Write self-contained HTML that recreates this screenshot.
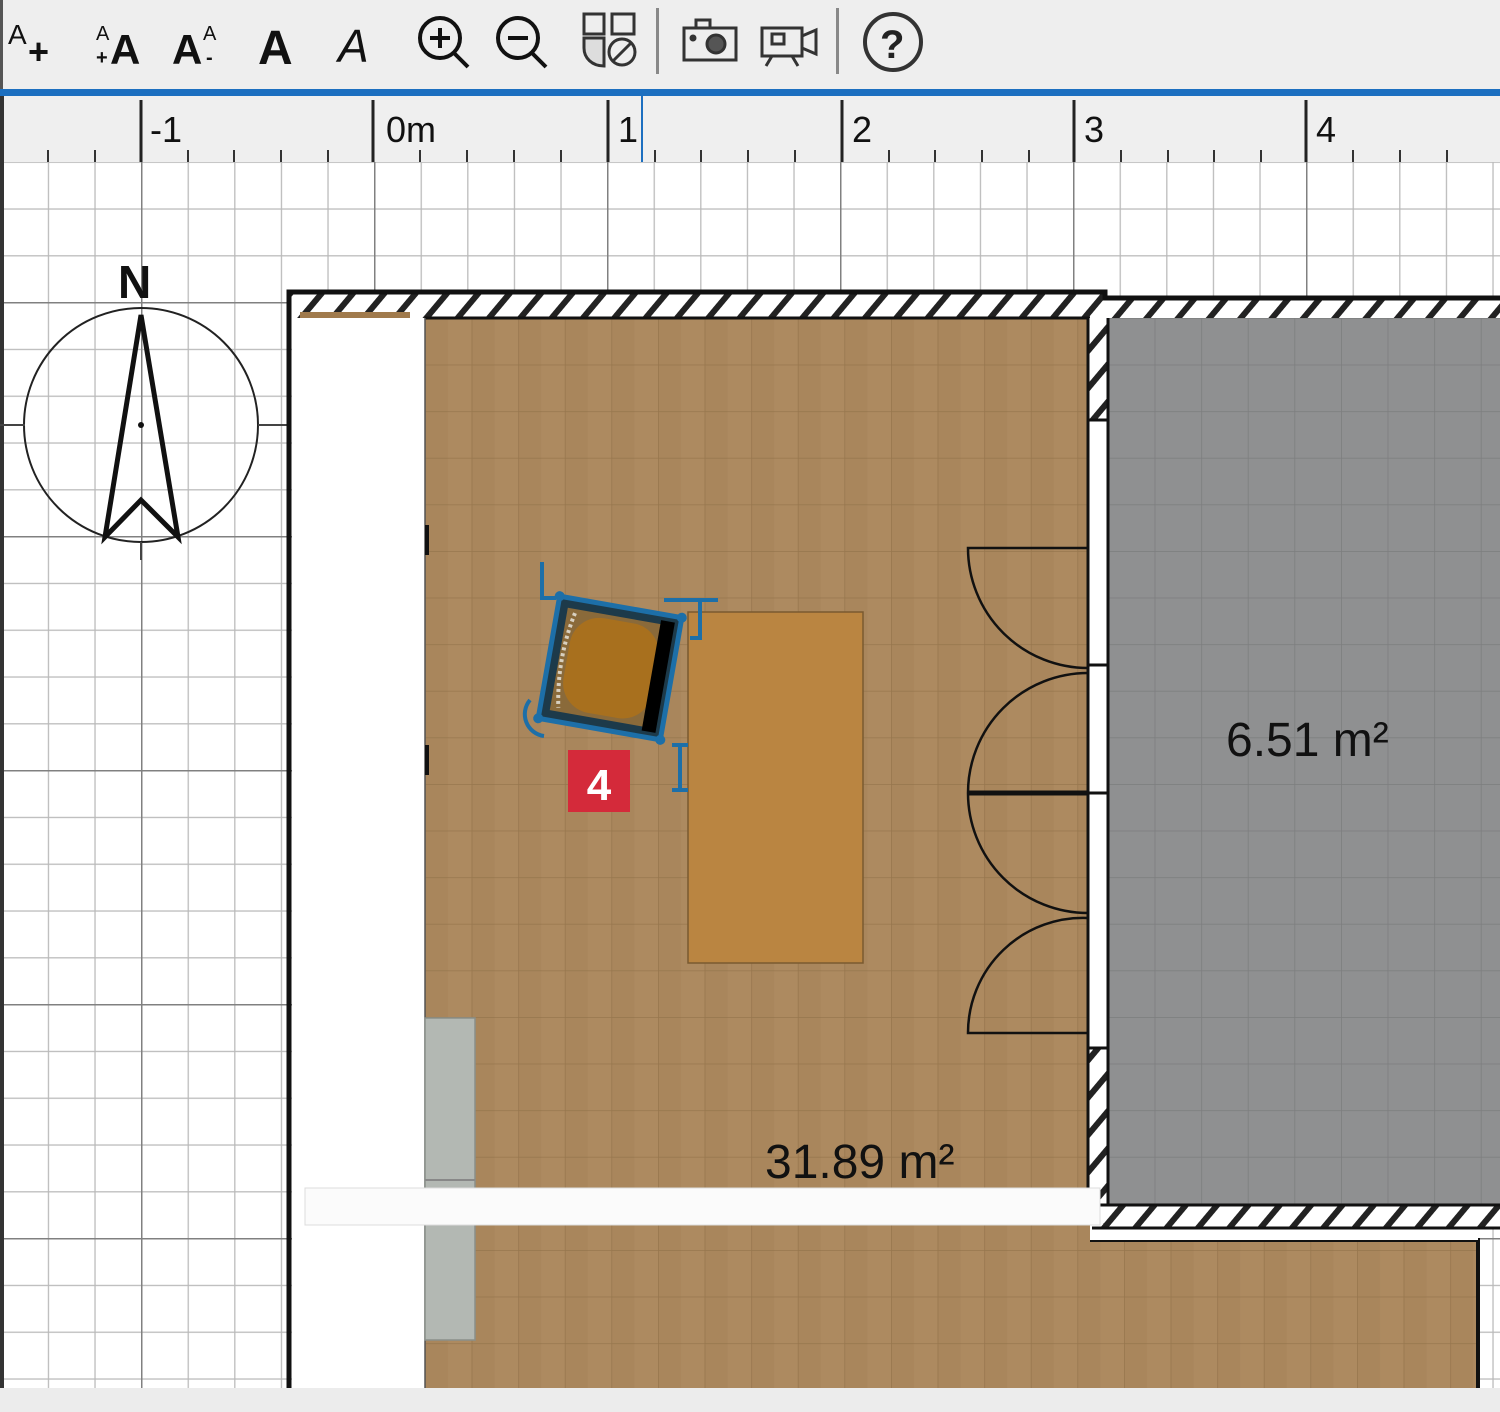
<!DOCTYPE html>
<html><head><meta charset="utf-8"><style>
html,body{margin:0;padding:0;background:#fff}
svg{display:block}
text{font-family:"Liberation Sans","DejaVu Sans",sans-serif}
</style></head><body>
<svg width="1500" height="1412" viewBox="0 0 1500 1412" xmlns="http://www.w3.org/2000/svg">
<defs>
<pattern id="minor" x="141" y="302" width="46.6" height="46.8" patternUnits="userSpaceOnUse">
<path d="M0 0V46.8M0 0H46.6" stroke="#b9b9b9" stroke-width="2.5" fill="none"/>
</pattern>
<pattern id="major" x="141" y="302" width="233" height="234" patternUnits="userSpaceOnUse">
<path d="M0 0V234M0 0H233" stroke="#808080" stroke-width="3" fill="none"/>
</pattern>
<pattern id="wood" x="425" y="318" width="46.6" height="46.6" patternUnits="userSpaceOnUse">
<rect width="46.6" height="46.6" fill="#a9865c"/>
<rect x="23" width="23.6" height="46.6" fill="#ad8a60"/>
<path d="M0 0V46.6M0 0H46.6" stroke="#8f6f48" stroke-width="1.5" fill="none" opacity=".7"/>
</pattern>
<pattern id="grey" x="1108" y="318" width="46.6" height="46.6" patternUnits="userSpaceOnUse">
<rect width="46.6" height="46.6" fill="#8f9091"/>
<path d="M0 0V46.6M0 0H46.6" stroke="#7c7d7e" stroke-width="1.5" fill="none"/>
</pattern>
<pattern id="hatch" width="24" height="24" patternUnits="userSpaceOnUse" patternTransform="rotate(40)">
<rect width="24" height="24" fill="#fff"/>
<rect width="6" height="24" fill="#222"/>
</pattern>
</defs>

<!-- toolbar -->
<rect x="0" y="0" width="1500" height="90" fill="#eeeeee"/>
<rect x="0" y="0" width="3" height="90" fill="#555"/>
<rect x="0" y="89" width="1500" height="7" fill="#1c6fc0"/>
<g fill="#111" font-weight="bold">
<text x="8" y="44" font-size="28" font-weight="normal">A</text>
<text x="28" y="64" font-size="36">+</text>
<text x="96" y="40" font-size="20" font-weight="normal">A</text>
<text x="96" y="64" font-size="20">+</text>
<text x="110" y="64" font-size="42">A</text>
<text x="172" y="64" font-size="42">A</text>
<text x="203" y="40" font-size="20" font-weight="normal">A</text>
<text x="206" y="64" font-size="20">-</text>
<text x="258" y="64" font-size="48">A</text>
<text x="338" y="62" font-size="46" font-weight="normal" font-style="italic">A</text>
</g>
<g stroke="#111" fill="none" stroke-width="4">
<circle cx="440" cy="38" r="20"/><path d="M454 53l14 14M430 38h20M440 28v20"/>
<circle cx="518" cy="38" r="20"/><path d="M532 53l14 14M508 38h20"/>
</g>
<g stroke="#333" fill="none" stroke-width="3">
<rect x="584" y="14" width="20" height="20"/><rect x="612" y="14" width="22" height="20"/>
<path d="M584 38h20v28c-12 0-20-8-20-18z" fill="#ddd"/>
<circle cx="622" cy="52" r="13"/><path d="M613 61l18-18"/>
</g>
<rect x="656" y="8" width="3" height="66" fill="#888"/>
<g stroke="#333" fill="none" stroke-width="3">
<rect x="684" y="28" width="52" height="32"/><rect x="696" y="20" width="14" height="8"/>
<circle cx="716" cy="44" r="9" fill="#555"/><circle cx="693" cy="38" r="2" fill="#333"/>
<rect x="762" y="28" width="40" height="28"/><path d="M802 36l14-6v24l-14-6"/>
<rect x="772" y="34" width="12" height="10"/><path d="M772 56l-6 10M792 56l6 10"/>
</g>
<rect x="836" y="8" width="3" height="66" fill="#888"/>
<circle cx="893" cy="42" r="28" fill="none" stroke="#333" stroke-width="4"/>
<text x="880" y="58" font-size="40" font-weight="bold" fill="#222">?</text>

<!-- ruler -->
<rect x="0" y="96" width="1500" height="66" fill="#efefef"/>
<g stroke="#222" stroke-width="3">
<path d="M141 100V162M373 100V162M608 100V162M842 100V162M1074 100V162M1306 100V162"/>
</g>
<g stroke="#333" stroke-width="2">
<path d="M48 150V162M95 150V162M188 150V162M234 150V162M281 150V162M328 150V162M420 150V162M467 150V162M514 150V162M561 150V162M655 150V162M701 150V162M748 150V162M795 150V162M889 150V162M935 150V162M982 150V162M1029 150V162M1121 150V162M1168 150V162M1214 150V162M1261 150V162M1353 150V162M1400 150V162M1447 150V162"/>
</g>
<path d="M642 96V166" stroke="#1c6fc0" stroke-width="2"/>
<g font-size="36" fill="#111">
<text x="150" y="142">-1</text><text x="386" y="142">0m</text><text x="618" y="142">1</text>
<text x="852" y="142">2</text><text x="1084" y="142">3</text><text x="1316" y="142">4</text>
</g>

<!-- grid -->
<rect x="0" y="162" width="1500" height="1226" fill="#fff"/>
<rect x="0" y="162" width="1500" height="1226" fill="url(#minor)"/>
<rect x="0" y="162" width="1500" height="1226" fill="url(#major)"/>
<rect x="0" y="96" width="4" height="1292" fill="#333"/>

<!-- compass -->
<circle cx="141" cy="425" r="117" fill="#fff" fill-opacity="0" stroke="#222" stroke-width="2"/>
<path d="M0 425H25M258 425H290M141 542V560" stroke="#444" stroke-width="2"/>
<path d="M141 315L105 537L141 500L178 537Z" fill="none" stroke="#111" stroke-width="5" stroke-linejoin="miter"/>
<circle cx="141" cy="425" r="3" fill="#111"/>
<text x="118" y="298" font-size="46" font-weight="bold" fill="#111">N</text>

<!-- floor -->
<rect x="425" y="318" width="665" height="1070" fill="url(#wood)"/>
<rect x="1090" y="1240" width="388" height="148" fill="url(#wood)"/>
<path d="M1090 1240H1478V1388" fill="none" stroke="#111" stroke-width="4"/>
<rect x="1090" y="1228" width="388" height="12" fill="#fff"/>
<!-- grey room -->
<rect x="1108" y="318" width="392" height="887" fill="url(#grey)"/>
<path d="M1108 318V1205H1500" fill="none" stroke="#222" stroke-width="3"/>
<!-- walls -->
<rect x="287" y="292" width="818" height="26" fill="url(#hatch)"/>
<rect x="1105" y="298" width="395" height="20" fill="url(#hatch)"/>
<path d="M289 1388V292H1105V298H1500M287 318" fill="none" stroke="#111" stroke-width="5"/>
<path d="M425 318H1090" stroke="#111" stroke-width="3"/>
<rect x="1088" y="318" width="20" height="887" fill="url(#hatch)"/>
<rect x="1088" y="420" width="20" height="628" fill="#fff"/>
<path d="M1088 318V1210M1108 318V1210M1088 420H1108M1088 665H1108M1088 793H1108M1088 1048H1108" stroke="#111" stroke-width="3"/>
<rect x="1100" y="1205" width="400" height="23" fill="url(#hatch)"/>
<path d="M1100 1205H1500M1092 1228H1500" stroke="#111" stroke-width="3"/>
<rect x="292" y="318" width="133" height="1070" fill="#fff"/>
<rect x="300" y="312" width="110" height="6" fill="#a07a4c"/>
<path d="M425 318V1388" stroke="#555" stroke-width="1.5"/>
<path d="M427 525V555M427 745V775" stroke="#111" stroke-width="4"/>
<!-- cabinet -->
<rect x="425" y="1018" width="50" height="322" fill="#b3b8b3" stroke="#8a8f8a" stroke-width="1.5"/>
<path d="M425 1180H475" stroke="#888" stroke-width="2"/>
<!-- white bar -->
<rect x="305" y="1188" width="795" height="37" fill="#fbfbfb" stroke="#ddd" stroke-width="1"/>
<!-- table -->
<rect x="688" y="612" width="175" height="351" fill="#ba8541" stroke="#7a5a30" stroke-width="1.5"/>
<!-- doors -->
<g fill="none" stroke="#111" stroke-width="2.5">
<path d="M1088 548H968A120 120 0 0 0 1088 668"/>
<path d="M1088 673A120 120 0 0 0 968 793"/>
<path d="M968 793A120 120 0 0 0 1088 913"/>
<path d="M1088 918A115 115 0 0 0 968 1033H1088"/>
</g>
<path d="M968 793H1088" stroke="#111" stroke-width="5"/>
<!-- chair -->
<g transform="rotate(10 610 668)">
<rect x="548" y="606" width="124" height="124" fill="#1d3a4a" stroke="#1d6fa8" stroke-width="5"/>
<rect x="558" y="616" width="100" height="104" fill="#8a6a3a"/>
<rect x="566" y="620" width="90" height="96" rx="30" fill="#a8701e"/>
<rect x="652" y="612" width="14" height="112" fill="#000"/>
<path d="M566 620Q556 668 566 716" stroke="#d8d0c0" stroke-width="4" fill="none" stroke-dasharray="3 3"/>
<g fill="#1d6fa8"><circle cx="548" cy="606" r="5"/><circle cx="672" cy="606" r="5"/><circle cx="548" cy="730" r="5"/><circle cx="672" cy="730" r="5"/></g>
</g>
<g stroke="#1d6fa8" stroke-width="4" fill="none">
<path d="M542 562V598H556"/>
<path d="M664 600H718M700 600V638H690"/>
<path d="M544 736A22 22 0 0 1 530 700"/>
<path d="M680 745V790M672 745H688M672 790H688"/>
</g>
<rect x="568" y="750" width="62" height="62" fill="#d42a3a"/>
<text x="599" y="800" font-size="44" font-weight="bold" fill="#fff" text-anchor="middle">4</text>
<!-- labels -->
<text x="1226" y="756" font-size="48" fill="#111">6.51 m²</text>
<text x="765" y="1178" font-size="48" fill="#111">31.89 m²</text>
<!-- bottom strip -->
<rect x="0" y="1388" width="1500" height="24" fill="#ececec"/>
</svg>
</body></html>
